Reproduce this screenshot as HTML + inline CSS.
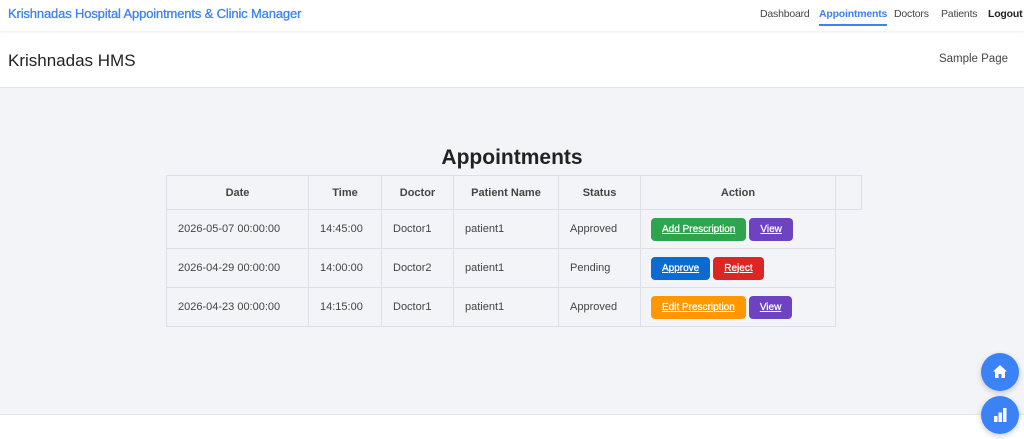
<!DOCTYPE html>
<html><head><style>
*{box-sizing:border-box;margin:0;padding:0}
body{width:1024px;height:434px;overflow:hidden;font-family:"Liberation Sans",sans-serif;background:#fff;position:relative;color:#333}
.nav{position:absolute;top:0;left:0;width:1024px;height:31px;background:#fff;box-shadow:0 1px 3px rgba(0,0,0,.08);z-index:2}
.brand{position:absolute;left:8px;top:6px;font-size:13px;color:#3b82f6;font-weight:normal;-webkit-text-stroke:.3px #3b82f6;letter-spacing:-.15px}
.links a{position:absolute;top:8px;font-size:10.5px;color:#444;text-decoration:none;letter-spacing:-.2px}
.hdr{position:absolute;top:32px;left:0;width:1024px;height:56px;background:#fff;border-bottom:1px solid #e2e4ea}
.hdr h1{position:absolute;left:8px;top:19px;font-size:17px;font-weight:normal;color:#222}
.hdr span{position:absolute;right:16px;top:21px;font-size:11.5px;color:#444}
.main{position:absolute;top:88px;left:0;width:1024px;height:327px;background:#f3f4f8;border-bottom:1px solid #e2e4ea}
h2{position:absolute;top:58px;width:1024px;text-align:center;font-size:21px;color:#222}
table{position:absolute;left:166px;top:87px;border-collapse:collapse;font-size:11px}
td,th{border:1px solid #dcdfe6;padding:0 11px;color:#444}
th{height:34px;text-align:center;font-weight:bold}
td{height:39px}
.b{display:inline-block;color:#fff;text-decoration:underline;border-radius:4px;padding:6px 11px;font-size:10px;margin-right:3px;-webkit-text-stroke:.25px #fff}
.fab{position:absolute;left:981px;width:38px;height:38px;border-radius:50%;background:#3b82f6;box-shadow:0 2px 6px rgba(0,0,0,.2)}
</style></head><body>
<div class="nav"><div class="brand">Krishnadas Hospital Appointments &amp; Clinic Manager</div>
<div class="links"><a style="left:760px">Dashboard</a><a style="left:819px;color:#3b82f6;font-weight:bold;border-bottom:2px solid #3b82f6;padding-bottom:4px">Appointments</a><a style="left:894px">Doctors</a><a style="left:941px">Patients</a><a style="left:988px;font-weight:bold;color:#222">Logout</a></div></div>
<div class="hdr"><h1>Krishnadas HMS</h1><span>Sample Page</span></div>
<div class="main"><h2>Appointments</h2>
<table>
<tr><th style="width:142px">Date</th><th style="width:73px">Time</th><th style="width:72px">Doctor</th><th style="width:105px">Patient Name</th><th style="width:82px">Status</th><th style="width:195px">Action</th><th style="width:26px"></th></tr>
<tr><td>2026-05-07 00:00:00</td><td>14:45:00</td><td>Doctor1</td><td>patient1</td><td>Approved</td><td style="padding:0 10px"><span class="b" style="background:#2ea44f">Add Prescription</span><span class="b" style="background:#6f42c1">View</span></td><td style="border:none;border-left:1px solid #dcdfe6"></td></tr>
<tr><td>2026-04-29 00:00:00</td><td>14:00:00</td><td>Doctor2</td><td>patient1</td><td>Pending</td><td style="padding:0 10px"><span class="b" style="background:#0b6bd3">Approve</span><span class="b" style="background:#dc2626">Reject</span></td><td style="border:none;border-left:1px solid #dcdfe6"></td></tr>
<tr><td>2026-04-23 00:00:00</td><td>14:15:00</td><td>Doctor1</td><td>patient1</td><td>Approved</td><td style="padding:0 10px"><span class="b" style="background:#ff9800">Edit Prescription</span><span class="b" style="background:#6f42c1">View</span></td><td style="border:none;border-left:1px solid #dcdfe6"></td></tr>
</table></div>
<div class="fab" style="top:353px"><svg width="38" height="38" viewBox="0 0 38 38"><path d="M19 12 L12 18.5 H14 V25 H17.5 V21 H20.5 V25 H24 V18.5 H26 Z" fill="#fff"/></svg></div>
<div class="fab" style="top:396px"><svg width="38" height="38" viewBox="0 0 38 38"><rect x="13" y="20" width="3.5" height="6" fill="#fff"/><rect x="17.5" y="16.5" width="3.5" height="9.5" fill="#fff"/><rect x="22" y="12" width="3.5" height="14" fill="#fff"/></svg></div>
</body></html>
